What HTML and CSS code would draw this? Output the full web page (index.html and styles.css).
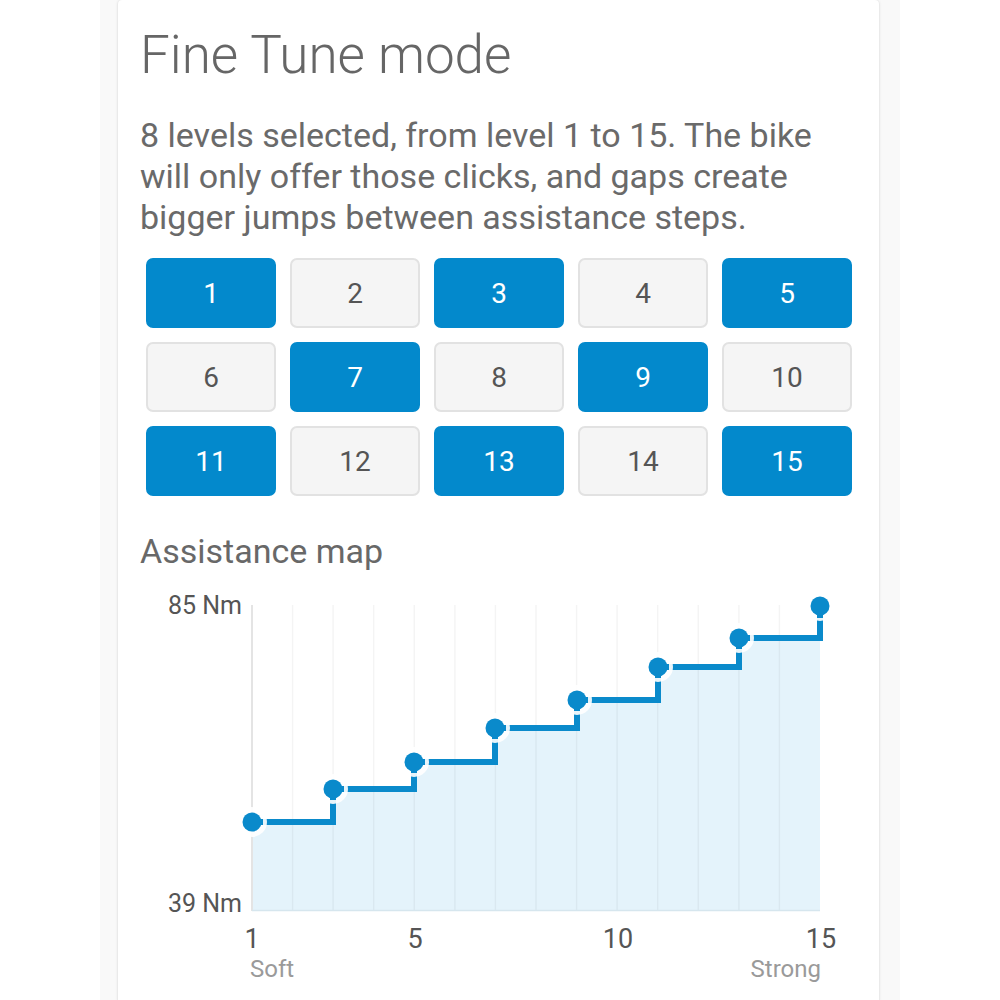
FILE: index.html
```html
<!DOCTYPE html>
<html lang="en">
<head>
<meta charset="utf-8">
<title>Fine Tune mode</title>
<link rel="stylesheet" href="styles.css">
</head>
<body>
<div class="page">
  <section class="card">
    <h1 class="title">Fine Tune mode</h1>
    <p class="summary">8 levels selected, from level 1 to 15. The bike will only offer those clicks, and gaps create bigger jumps between assistance steps.</p>
    <div class="levels">
      <button class="level on">1</button>
      <button class="level">2</button>
      <button class="level on">3</button>
      <button class="level">4</button>
      <button class="level on">5</button>
      <button class="level">6</button>
      <button class="level on">7</button>
      <button class="level">8</button>
      <button class="level on">9</button>
      <button class="level">10</button>
      <button class="level on">11</button>
      <button class="level">12</button>
      <button class="level on">13</button>
      <button class="level">14</button>
      <button class="level on">15</button>
    </div>
    <h2 class="subtitle">Assistance map</h2>
    <svg class="chart" width="711" height="429" viewBox="140 571 711 429" xmlns="http://www.w3.org/2000/svg">
      <polygon class="area" points="252,910 252,822 333,822 333,789 414,789 414,762 495,762 495,728 577,728 577,700 658,700 658,667 739,667 739,638 820,638 820,910"/>
      <g class="grid">
        <line x1="292.6" y1="605" x2="292.6" y2="910"/>
        <line x1="333.1" y1="605" x2="333.1" y2="910"/>
        <line x1="373.7" y1="605" x2="373.7" y2="910"/>
        <line x1="414.3" y1="605" x2="414.3" y2="910"/>
        <line x1="454.9" y1="605" x2="454.9" y2="910"/>
        <line x1="495.4" y1="605" x2="495.4" y2="910"/>
        <line x1="536" y1="605" x2="536" y2="910"/>
        <line x1="576.6" y1="605" x2="576.6" y2="910"/>
        <line x1="617.1" y1="605" x2="617.1" y2="910"/>
        <line x1="657.7" y1="605" x2="657.7" y2="910"/>
        <line x1="698.3" y1="605" x2="698.3" y2="910"/>
        <line x1="738.9" y1="605" x2="738.9" y2="910"/>
        <line x1="779.4" y1="605" x2="779.4" y2="910"/>
      </g>
      <line class="axis" x1="252" y1="605" x2="252" y2="911"/>
      <line class="base" x1="252" y1="910.5" x2="820" y2="910.5"/>
      <path class="step" d="M252 822 H333 V789 H414 V762 H495 V728 H577 V700 H658 V667 H739 V638 H820 V606"/>
      <g class="halo">
        <circle cx="252" cy="822" r="15"/>
        <circle cx="333" cy="789" r="15"/>
        <circle cx="414" cy="762" r="15"/>
        <circle cx="495" cy="728" r="15"/>
        <circle cx="577" cy="700" r="15"/>
        <circle cx="658" cy="667" r="15"/>
        <circle cx="739" cy="638" r="15"/>
        <circle cx="820" cy="606" r="15"/>
      </g>
      <path class="stub" d="M252 822 h11 M333 789 h11 M333 789 v11 M414 762 h11 M414 762 v11 M495 728 h11 M495 728 v11 M577 700 h11 M577 700 v11 M658 667 h11 M658 667 v11 M739 638 h11 M739 638 v11 M820 606 v12"/>
      <g class="dot">
        <circle cx="252" cy="822" r="9.5"/>
        <circle cx="333" cy="789" r="9.5"/>
        <circle cx="414" cy="762" r="9.5"/>
        <circle cx="495" cy="728" r="9.5"/>
        <circle cx="577" cy="700" r="9.5"/>
        <circle cx="658" cy="667" r="9.5"/>
        <circle cx="739" cy="638" r="9.5"/>
        <circle cx="820" cy="606" r="9.5"/>
      </g>
      <text class="ylab" x="242" y="614">85 Nm</text>
      <text class="ylab" x="242" y="912">39 Nm</text>
      <text class="xlab" x="252" y="948">1</text>
      <text class="xlab" x="415" y="948">5</text>
      <text class="xlab" x="618" y="948">10</text>
      <text class="xlab" x="821" y="948">15</text>
      <text class="end soft" x="250" y="977">Soft</text>
      <text class="end strong" x="821" y="977">Strong</text>
    </svg>
  </section>
</div>
</body>
</html>
```

FILE: styles.css
```css
html, body {
  margin: 0;
  padding: 0;
  background: #ffffff;
}

body {
  font-family: Roboto, "Noto Sans", "Liberation Sans", sans-serif;
  overflow: hidden;
}

.page {
  width: 800px;
  height: 1000px;
  margin: 0 auto;
  background: #f9f9f9;
  padding-left: 18px;
  box-sizing: border-box;
}

.card {
  width: 761px;
  height: 1004px;
  box-sizing: border-box;
  background: #ffffff;
  border-radius: 4px;
  box-shadow: 0 0 3px rgba(0, 0, 0, 0.14), 0 1px 2px rgba(0, 0, 0, 0.06);
  padding: 25px 28px 0 22px;
}

.title {
  margin: 0;
  font-size: 53px;
  line-height: 60px;
  font-weight: 300;
  color: #666666;
}

.summary {
  margin: 30px 0 0;
  font-size: 34px;
  line-height: 41px;
  font-weight: 400;
  color: #6a6a6a;
}

.levels {
  margin: 20px 0 0 6px;
  display: grid;
  grid-template-columns: repeat(5, 130px);
  grid-auto-rows: 70px;
  gap: 14px;
}

.level {
  font-family: Roboto, "Noto Sans", "Liberation Sans", sans-serif;
  font-size: 28px;
  font-weight: 400;
  color: #555555;
  background: #f5f5f5;
  border: 2px solid #e2e2e2;
  border-radius: 7px;
  padding: 0;
  display: flex;
  align-items: center;
  justify-content: center;
}

.level.on {
  background: #0389cc;
  border-color: #0389cc;
  color: #ffffff;
}

.subtitle {
  margin: 35px 0 0;
  font-size: 34px;
  line-height: 40px;
  font-weight: 400;
  color: #686868;
}

.chart {
  display: block;
}

.area {
  fill: #e4f3fb;
}

.grid line {
  stroke: rgba(0, 0, 0, 0.045);
  stroke-width: 1.5;
}

.axis {
  stroke: #e4e4e4;
  stroke-width: 2;
}

.base {
  stroke: #d6e6ee;
  stroke-width: 1.5;
}

.step {
  fill: none;
  stroke: #0a8acb;
  stroke-width: 6;
}

.halo circle {
  fill: #ffffff;
  opacity: 0.9;
}

.stub {
  fill: none;
  stroke: #0a8acb;
  stroke-width: 6;
}

.dot circle {
  fill: #0a8acb;
}

.ylab {
  font-family: Roboto, "Noto Sans", "Liberation Sans", sans-serif;
  font-size: 25px;
  fill: #555555;
  text-anchor: end;
}

.xlab {
  font-family: Roboto, "Noto Sans", "Liberation Sans", sans-serif;
  font-size: 27px;
  fill: #555555;
  text-anchor: middle;
}

.end {
  font-family: Roboto, "Noto Sans", "Liberation Sans", sans-serif;
  font-size: 24px;
  fill: #9a9a9a;
}

.soft {
  text-anchor: start;
}

.strong {
  text-anchor: end;
}
```
